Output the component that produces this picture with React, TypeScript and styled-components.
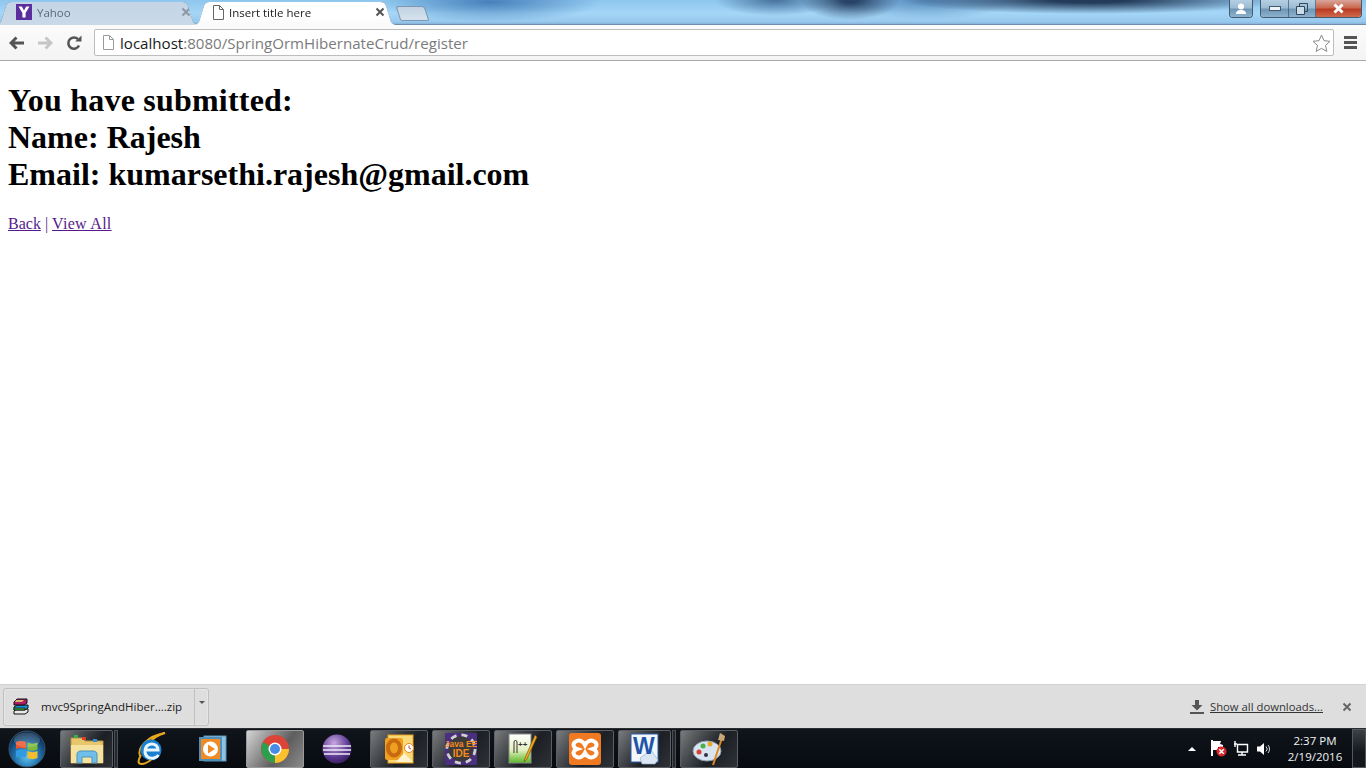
import React from "react";
import styled, { createGlobalStyle } from "styled-components";

const GlobalStyle = createGlobalStyle`
  html, body {
    margin: 0;
    padding: 0;
    background: #fff;
  }
  body {
    font-family: "Liberation Serif", serif;
  }
`;

const Screen = styled.div`
  width: 1366px;
  height: 768px;
  overflow: hidden;
  display: flex;
  flex-direction: column;
`;

const TabStrip = styled.div`
  height: 25px;
  flex-shrink: 0;
  display: flex;
  align-items: flex-start;
  padding: 0 4px 0 0;
  box-sizing: border-box;
  border-bottom: 1px solid #6f8eae;
  background:
    radial-gradient(ellipse 190px 14px at 1090px 0px, rgba(30, 52, 82, 0.95) 20%, transparent),
    radial-gradient(ellipse 50px 20px at 850px 0px, rgba(34, 60, 94, 0.95) 15%, transparent),
    radial-gradient(ellipse 60px 16px at 775px 0px, rgba(52, 92, 136, 0.8), transparent),
    radial-gradient(ellipse 90px 20px at 925px 0px, rgba(70, 120, 172, 0.75), transparent),
    radial-gradient(ellipse 110px 20px at 490px 2px, rgba(56, 116, 178, 0.85), transparent),
    linear-gradient(180deg, #8ec6ee 0%, #a4d6f7 55%, #98c9ee 90%, #86b3da 100%);
`;

const Tabs = styled.div`
  display: flex;
  padding-top: 1px;
  height: 24px;
  filter: drop-shadow(0 0 0.6px #4f6a86);
`;

const Tab = styled.div<{ $active?: boolean }>`
  width: 206px;
  height: 24px;
  box-sizing: border-box;
  margin-left: ${(p) => (p.$active ? "-8px" : "-6px")};
  padding: 0 ${(p) => (p.$active ? "13px" : "9px")} 2px ${(p) => (p.$active ? "20px" : "22px")};
  display: flex;
  align-items: center;
  position: relative;
  z-index: ${(p) => (p.$active ? 2 : 1)};
  background: ${(p) =>
    p.$active
      ? "linear-gradient(180deg, #ffffff 0%, #ffffff 70%, #f8f9fa 100%)"
      : "linear-gradient(180deg, #c3d4e4 0%, #cad9e8 100%)"};
  clip-path: path("M0 24 C5 24 7 22 8 18 L12 5 C13 2 15 1 18 1 L188 1 C191 1 193 2 194 5 L198 18 C199 22 201 24 206 24 Z");
`;

const TabTitle = styled.span<{ $active?: boolean }>`
  flex: 1;
  margin-left: 5px;
  font: 11.5px "Open Sans", sans-serif;
  color: ${(p) => (p.$active ? "#222" : "#5c6a78")};
  white-space: nowrap;
`;

const NewTab = styled.div`
  width: 29px;
  height: 15px;
  margin: 6px 0 0 0;
  background: linear-gradient(180deg, #c2d2e2, #d6e2ee);
  border: 1px solid #7f97ae;
  box-sizing: border-box;
  border-radius: 3px 3px 2px 2px;
  transform: skewX(18deg);
`;

const WindowControls = styled.div`
  margin-left: auto;
  display: flex;
  gap: 7px;
`;

const CaptionGroup = styled.div`
  display: flex;
  height: 18px;
  box-sizing: border-box;
  border: 1px solid #46586c;
  border-top: 0;
  border-radius: 0 0 4px 4px;
  overflow: hidden;
  box-shadow: inset 0 0 0 1px rgba(255, 255, 255, 0.45);
`;

const CaptionButton = styled.div<{ $width: number; $close?: boolean }>`
  width: ${(p) => p.$width}px;
  display: flex;
  align-items: center;
  justify-content: center;
  border-right: 1px solid rgba(50, 70, 90, 0.6);
  background: ${(p) =>
    p.$close
      ? "linear-gradient(180deg, #d9a59b 0%, #c9694f 45%, #b93b22 55%, #cf6a4d 100%)"
      : "linear-gradient(180deg, #b5cfe2 0%, #9cbcd4 45%, #6f96b6 55%, #8cb2cf 100%)"};
  &:last-child {
    border-right: 0;
  }
`;

const Toolbar = styled.div`
  height: 36px;
  flex-shrink: 0;
  box-sizing: border-box;
  display: flex;
  align-items: center;
  padding: 0 8px 0 0;
  background: linear-gradient(180deg, #fbfbfb 0%, #f4f4f4 100%);
  border-bottom: 1px solid #a9a9a9;
`;

const NavButton = styled.div`
  width: 29px;
  height: 20px;
  display: flex;
  align-items: center;
  justify-content: center;
`;

const BackSlot = styled(NavButton)`
  width: 26px;
  margin-left: 4px;
`;

const Omnibox = styled.div`
  width: 1240px;
  height: 27px;
  margin-left: 6px;
  box-sizing: border-box;
  background: #fff;
  border: 1px solid #bdbdbd;
  border-radius: 2px;
  display: flex;
  align-items: center;
  padding: 0 2px 0 7px;
`;

const Url = styled.span`
  flex: 1;
  margin-left: 6px;
  font: 15.1px "Open Sans", sans-serif;
  color: #7b7b7b;
  white-space: nowrap;
`;

const Host = styled.span`
  color: #1a1a1a;
`;

const MenuButton = styled.div`
  margin-left: 10px;
  width: 13px;
  display: flex;
  flex-direction: column;
  gap: 2px;
  span {
    height: 3px;
    background: #555;
  }
`;

const Content = styled.main`
  flex: 1;
  padding: 0 8px;
  color: #000;
  overflow: hidden;
`;

const Heading = styled.h1`
  font: bold 32px/37px "Liberation Serif", serif;
  margin: 21px 0 22px;
`;

const HeadingLead = styled.span`
  letter-spacing: 0.21px;
`;

const LinkLine = styled.div`
  font: 16px/18px "Liberation Serif", serif;
  color: #551a8b;
  a {
    color: #551a8b;
  }
`;

const ViewAllLink = styled.a`
  letter-spacing: 0.28px;
`;

const DownloadBar = styled.div`
  height: 44px;
  flex-shrink: 0;
  box-sizing: border-box;
  background: #dedede;
  border-top: 1px solid #d2d2d2;
  display: flex;
  align-items: center;
  padding: 0 14px 0 3px;
`;

const DownloadItem = styled.div`
  width: 206px;
  height: 38px;
  box-sizing: border-box;
  display: flex;
  align-items: stretch;
  border: 1px solid #c0c0c0;
  border-radius: 3px;
  box-shadow: inset 0 0 0 1px #e6e6e6;
`;

const DownloadFile = styled.div`
  flex: 1;
  display: flex;
  align-items: center;
  padding-left: 9px;
  gap: 12px;
  border-right: 1px solid #c0c0c0;
  font: 11.5px "Open Sans", sans-serif;
  color: #222;
`;

const DownloadCaret = styled.div`
  width: 13px;
  display: flex;
  justify-content: center;
  padding-top: 12px;
  box-sizing: border-box;
  &::before {
    content: "";
    width: 0;
    height: 0;
    border-left: 3px solid transparent;
    border-right: 3px solid transparent;
    border-top: 3px solid #555;
  }
`;

const ShowAll = styled.a`
  margin-left: auto;
  display: flex;
  align-items: center;
  gap: 6px;
  font: 11.3px "Open Sans", sans-serif;
  color: #333;
  span {
    text-decoration: underline;
  }
`;

const CloseBar = styled.div`
  margin-left: 19px;
  display: flex;
`;

const Taskbar = styled.div`
  height: 40px;
  flex-shrink: 0;
  box-sizing: border-box;
  display: flex;
  align-items: center;
  background: linear-gradient(180deg, #10151b 0%, #070b10 100%);
  border-top: 1px solid #2a2e33;
  padding-left: 7px;
`;

const StartOrb = styled.div`
  width: 40px;
  height: 39px;
  display: flex;
  align-items: center;
  justify-content: center;
  margin-right: 13px;
`;

const TaskButton = styled.div<{ $width?: number; $active?: boolean; $bare?: boolean; $grouped?: boolean }>`
  width: ${(p) => p.$width ?? 58}px;
  height: 38px;
  margin-right: ${(p) => (p.$grouped ? 1 : 4)}px;
  box-sizing: border-box;
  flex-shrink: 0;
  display: flex;
  align-items: center;
  justify-content: center;
  border-radius: 2px;
  ${(p) =>
    p.$bare
      ? ""
      : `border: 1px solid ${p.$active ? "#9a9a9a" : "#5b5f63"};`}
  background: ${(p) =>
    p.$bare
      ? "transparent"
      : p.$active
        ? "linear-gradient(125deg, #d4d4d4 0%, #8f8f8f 35%, #5e5e5e 60%, #8a8a8a 100%)"
        : "linear-gradient(125deg, #7a7c7e 0%, #404347 35%, #1c2025 60%, #2e3237 100%)"};
`;

const Grip = styled.div`
  width: 4px;
  height: 38px;
  margin-right: 4px;
  flex-shrink: 0;
  box-sizing: border-box;
  border: 1px solid #4a4e52;
  background: #24282c;
`;

const Tray = styled.div`
  margin-left: auto;
  display: flex;
  align-items: center;
  height: 100%;
`;

const TraySlot = styled.div<{ $width: number }>`
  width: ${(p) => p.$width}px;
  display: flex;
  justify-content: center;
`;

const Clock = styled.div`
  width: 74px;
  padding-top: 1px;
  text-align: center;
  font: 11.5px/16px "Open Sans", sans-serif;
  color: #f2f2f2;
`;

const ShowDesktop = styled.div`
  width: 14px;
  height: 100%;
  box-sizing: border-box;
  border: 1px solid #54585c;
  background: linear-gradient(180deg, #3d4044 0%, #14181c 60%);
`;

const TrayCaret = styled.div`
  width: 0;
  height: 0;
  border-left: 4px solid transparent;
  border-right: 4px solid transparent;
  border-bottom: 4px solid #fff;
`;

const PageIcon = ({ color = "#666" }: { color?: string }) => (
  <svg width="12" height="15" viewBox="0 0 12 15">
    <path d="M1.5.5h6l4 4v10h-10z" fill="#fff" stroke={color} />
    <path d="M7.5.5v4h4" fill="none" stroke={color} />
  </svg>
);

const TabClose = ({ color }: { color: string }) => (
  <svg width="10" height="10" viewBox="0 0 10 10">
    <path d="M1.5 1.5l7 7M8.5 1.5l-7 7" stroke={color} strokeWidth="2" />
  </svg>
);

const YahooIcon = () => (
  <svg width="16" height="16" viewBox="0 0 16 16">
    <rect width="16" height="16" fill="#5b2e9e" />
    <path d="M2.5 2.5h3.4L8 6.6l2.1-4.1h3.4L9.6 9v4.5H6.4V9z" fill="#fff" />
  </svg>
);

const ArrowIcon = ({ color, flip }: { color: string; flip?: boolean }) => (
  <svg width="16" height="14" viewBox="0 0 16 14">
    <path
      d="M7.5 1.5L2 7l5.5 5.5M2.5 7H15"
      fill="none"
      stroke={color}
      strokeWidth="3"
      transform={flip ? "matrix(-1 0 0 1 16 0)" : undefined}
    />
  </svg>
);

const ReloadIcon = () => (
  <svg width="16" height="16" viewBox="0 0 16 16">
    <path d="M13 10.5A5.6 5.6 0 1 1 12 4.2" fill="none" stroke="#555" strokeWidth="2.6" />
    <path d="M9.2 6.6H15.5V.4z" fill="#555" />
  </svg>
);

const StarIcon = () => (
  <svg width="19" height="18" viewBox="0 0 19 18">
    <path d="M9.5 1l2.5 5.7 6 .6-4.5 4.1 1.3 6-5.3-3.1-5.3 3.1 1.3-6L1 7.3l6-.6z" fill="#fff" stroke="#8a8a8a" />
  </svg>
);

const ArchiveIcon = () => (
  <svg width="16" height="17" viewBox="0 0 16 17">
    <path d="M1 13l3-2h11v3l-3 2H1z" fill="#e8e8e8" stroke="#111" />
    <path d="M1 9l3-2h11v3l-3 2H1z" fill="#1c8fd0" stroke="#111" />
    <path d="M1 10h11v2H1z" fill="#38a838" stroke="#111" strokeWidth=".7" />
    <path d="M1 4l3-3h10v4l-3 2H1z" fill="#b0186a" stroke="#111" />
    <path d="M3 2h8l-2 2H2z" fill="#d8b868" />
  </svg>
);

const DownloadIcon = () => (
  <svg width="14" height="14" viewBox="0 0 14 14">
    <path d="M5 0h4v5h3.5L7 10.5 1.5 5H5zM0 12h14v2H0z" fill="#555" />
  </svg>
);

const WinOrb = () => (
  <svg width="38" height="38" viewBox="0 0 38 38">
    <defs>
      <radialGradient id="orb" cx="50%" cy="72%" r="65%">
        <stop offset="0%" stopColor="#5fc3f0" />
        <stop offset="55%" stopColor="#1e6ea8" />
        <stop offset="100%" stopColor="#0c2d4f" />
      </radialGradient>
    </defs>
    <circle cx="19" cy="19" r="18" fill="url(#orb)" stroke="#3a5268" />
    <path d="M8 12c3-1.500 7-1.500 10 0v7c-3-1.500-7-1.500-10 0z" fill="#e8552c" />
    <path d="M19.500 12.500c3 1.500 7 1.500 10 0v7c-3 1.500-7 1.500-10 0z" fill="#7fba3a" />
    <path d="M8 20.500c3-1.500 7-1.500 10 0v7c-3-1.500-7-1.500-10 0z" fill="#2f9be0" />
    <path d="M19.500 21c3 1.500 7 1.500 10 0v7c-3 1.500-7 1.500-10 0z" fill="#f2bd2e" />
    <ellipse cx="19" cy="10" rx="13" ry="7.500" fill="#fff" opacity=".16" />
  </svg>
);

const FolderIcon = () => (
  <svg width="36" height="32" viewBox="0 0 36 32">
    <path d="M2 5h12l2 3h18v22H2z" fill="#e8c66c" stroke="#b69442" />
    <rect x="5" y="2" width="4" height="3" fill="#3cae4a" />
    <rect x="13" y="4" width="4" height="3" fill="#d9402c" />
    <rect x="24" y="6" width="4" height="3" fill="#2f8ed8" />
    <path d="M2 12h32v18H2z" fill="#f6e2a0" />
    <path d="M8 30V21c0-2 2-3 4-3h12c2 0 4 1 4 3v9h-5v-6H13v6z" fill="#6fbfe8" stroke="#4a93c0" />
  </svg>
);

const IeIcon = () => (
  <svg width="34" height="34" viewBox="0 0 34 34">
    <path d="M6 24C3 16 13 4 31 1c-7 2-13 6-17 11" fill="none" stroke="#e8a71c" strokeWidth="2" />
    <circle cx="17" cy="18" r="10.500" fill="#1a7fd0" />
    <path d="M11 18h13c0-4-3-6-6.500-6S10.500 15 11 20s5 7 9 6c2-.5 3.500-1.500 4.500-3" fill="none" stroke="#e7f5ff" strokeWidth="3" />
    <path d="M7 23c-3 5-4 9 1 9 3 0 6-2 9-4" fill="none" stroke="#e8a71c" strokeWidth="2" />
  </svg>
);

const MediaIcon = () => (
  <svg width="28" height="27" viewBox="0 0 28 27">
    <rect x="5" y="1" width="22" height="25" fill="#8ec2e0" stroke="#5b93b8" />
    <rect x="1" y="3" width="21" height="22" fill="#f08a24" stroke="#4f8fb8" strokeWidth="2" />
    <circle cx="11.500" cy="14" r="7.500" fill="#fff" />
    <path d="M9 9.500l7 4.500-7 4.500z" fill="#f08a24" />
  </svg>
);

const ChromeIcon = () => (
  <svg width="30" height="30" viewBox="0 0 30 30">
    <circle cx="15" cy="15" r="14" fill="#db4437" />
    <path d="M15 15L3 8A14 14 0 0 0 15 29z" fill="#2f9e4f" />
    <path d="M15 15h14A14 14 0 0 1 15 29z" fill="#fbc02d" />
    <circle cx="15" cy="15" r="6.500" fill="#fff" />
    <circle cx="15" cy="15" r="5" fill="#4a8be8" />
  </svg>
);

const EclipseIcon = () => (
  <svg width="30" height="30" viewBox="0 0 30 30">
    <defs>
      <radialGradient id="ecl" cx="40%" cy="30%" r="80%">
        <stop offset="0%" stopColor="#c9a8e0" />
        <stop offset="60%" stopColor="#5c3a92" />
        <stop offset="100%" stopColor="#2a1750" />
      </radialGradient>
    </defs>
    <circle cx="15" cy="15" r="14.500" fill="url(#ecl)" />
    <path d="M1 12h28M1 16h28M2 20h26" stroke="#f0eaf8" strokeWidth="1.400" />
  </svg>
);

const OutlookIcon = () => (
  <svg width="30" height="30" viewBox="0 0 30 30">
    <rect x="4" y="1" width="25" height="28" fill="#fbd877" stroke="#e8a020" />
    <rect x="1" y="4" width="18" height="22" rx="2" fill="#f0a020" />
    <ellipse cx="10" cy="14" rx="6" ry="7.500" fill="none" stroke="#c86a10" strokeWidth="4" />
    <circle cx="25" cy="14" r="4.500" fill="#fff" stroke="#e08a20" />
    <path d="M25 11.500V14l2 1" fill="none" stroke="#c0501c" />
    <path d="M12 28l8-9 9 9z" fill="#fff3cf" />
  </svg>
);

const JavaEeIcon = () => (
  <svg width="32" height="32" viewBox="0 0 32 32">
    <rect width="32" height="32" rx="1" fill="#4b2f7f" />
    <circle cx="16" cy="16" r="14" fill="none" stroke="#d0d0d0" strokeWidth="3" strokeDasharray="6 5" />
    <circle cx="16" cy="16" r="12.500" fill="#3a3a3a" />
    <text x="16" y="14" textAnchor="middle" fontFamily="Liberation Sans, sans-serif" fontSize="8.500" fontWeight="bold" fill="#f58a1f">
      Java EE
    </text>
    <text x="16" y="24" textAnchor="middle" fontFamily="Liberation Sans, sans-serif" fontSize="10" fontWeight="bold" fill="#f58a1f">
      IDE
    </text>
  </svg>
);

const NotepadIcon = () => (
  <svg width="30" height="33" viewBox="0 0 30 33">
    <defs>
      <linearGradient id="npp" x1="0" y1="0" x2="0" y2="1">
        <stop offset="0%" stopColor="#ffffff" />
        <stop offset="55%" stopColor="#e4f0c0" />
        <stop offset="100%" stopColor="#58b828" />
      </linearGradient>
    </defs>
    <rect x="1" y="2" width="22" height="29" fill="url(#npp)" stroke="#888" />
    <path d="M6 21V10a1.500 1.500 0 0 1 3 0v11" fill="none" stroke="#333" />
    <text x="10" y="15" fontFamily="Liberation Sans, sans-serif" fontSize="8" fontWeight="bold" fill="#333">
      ++
    </text>
    <path d="M27 3L17 26l-1 4 3-3L29 5z" fill="#f0a818" stroke="#6a4a10" strokeWidth=".6" />
  </svg>
);

const XamppIcon = () => (
  <svg width="32" height="32" viewBox="0 0 32 32">
    <rect width="32" height="32" rx="3" fill="#ef7a22" />
    <path d="M6 9c4-3 8-1 10 3 2-4 6-6 10-3 3 3 1 6-2 7 3 1 5 4 2 7-4 3-8 1-10-3-2 4-6 6-10 3-3-3-1-6 2-7-3-1-5-4-2-7z" fill="none" stroke="#fff" strokeWidth="4" />
  </svg>
);

const WordIcon = () => (
  <svg width="30" height="32" viewBox="0 0 30 32">
    <rect x="1" y="1" width="27" height="28" fill="#f2f7fc" stroke="#2a5aa8" />
    <path d="M10 25l11-8 7 10-3 4H12z" fill="#dbe6f3" stroke="#8ea8c8" strokeWidth=".6" />
    <text x="3" y="21" fontFamily="Liberation Sans, sans-serif" fontSize="23" fontWeight="bold" fill="#1f54a8">
      W
    </text>
  </svg>
);

const PaintIcon = () => (
  <svg width="34" height="34" viewBox="0 0 34 34">
    <ellipse cx="15" cy="19" rx="14" ry="10" fill="#d8e4f0" stroke="#8ca0b4" />
    <circle cx="7" cy="20" r="2.500" fill="#d84030" />
    <circle cx="11" cy="14" r="2.500" fill="#4ab04a" />
    <circle cx="18" cy="12" r="2.500" fill="#e8a828" />
    <circle cx="14" cy="23" r="2" fill="#334" />
    <path d="M30 6L21 33" stroke="#e08820" strokeWidth="2" />
    <path d="M26 8l2-7 5 3-1 5z" fill="#c8a878" />
  </svg>
);

const FlagIcon = () => (
  <svg width="17" height="17" viewBox="0 0 17 17">
    <path d="M2 0v16" stroke="#fff" strokeWidth="2" />
    <path d="M3 1h8l-1 3 3 1v2H3z" fill="#fff" />
    <path d="M3 7h5v3H3z" fill="#fff" />
    <circle cx="11.500" cy="11.500" r="5" fill="#d8272d" />
    <path d="M9.300 9.300l4.400 4.400M13.700 9.300l-4.400 4.400" stroke="#fff" strokeWidth="1.500" />
  </svg>
);

const NetworkIcon = () => (
  <svg width="15" height="15" viewBox="0 0 15 15">
    <path d="M3.500 3.500h10v7.500h-10zM8 11v2.500M4 14h8" fill="none" stroke="#fff" strokeWidth="1.400" />
    <path d="M1 0v6M0 3h3" stroke="#fff" strokeWidth="1.400" />
  </svg>
);

const SpeakerIcon = () => (
  <svg width="16" height="14" viewBox="0 0 16 14">
    <path d="M0 4.500h3L7 1v12L3 9.500H0z" fill="#fff" />
    <path d="M9 4.500a3.500 3.500 0 0 1 0 5M11 3a6 6 0 0 1 0 8" fill="none" stroke="#d8d8d8" />
  </svg>
);

export default function App() {
  return (
    <Screen>
      <GlobalStyle />
      <TabStrip>
        <Tabs>
          <Tab>
            <YahooIcon />
            <TabTitle>Yahoo</TabTitle>
            <TabClose color="#8a97a4" />
          </Tab>
          <Tab $active>
            <PageIcon />
            <TabTitle $active>Insert title here</TabTitle>
            <TabClose color="#555" />
          </Tab>
        </Tabs>
        <NewTab />
        <WindowControls>
          <CaptionGroup>
            <CaptionButton $width={22}>
              <svg width="12" height="12" viewBox="0 0 12 12">
                <circle cx="6" cy="3.500" r="3" fill="#fff" />
                <path d="M1 11c0-3 2-4 5-4s5 1 5 4z" fill="#fff" />
              </svg>
            </CaptionButton>
          </CaptionGroup>
          <CaptionGroup>
            <CaptionButton $width={27}>
              <svg width="12" height="5" viewBox="0 0 12 5">
                <rect x=".5" y=".5" width="11" height="4" fill="#eef3f7" stroke="#44586c" />
              </svg>
            </CaptionButton>
            <CaptionButton $width={26}>
              <svg width="12" height="12" viewBox="0 0 12 12">
                <path d="M3.500.500h8v8h-8z" fill="none" stroke="#34485c" />
                <path d="M.500 3.500h8v8h-8z" fill="#c8dcea" stroke="#34485c" />
              </svg>
            </CaptionButton>
            <CaptionButton $width={45} $close>
              <svg width="13" height="11" viewBox="0 0 13 11">
                <path d="M2.500 1.500l8 8M10.500 1.500l-8 8" stroke="#fff" strokeWidth="3" />
              </svg>
            </CaptionButton>
          </CaptionGroup>
        </WindowControls>
      </TabStrip>

      <Toolbar>
        <BackSlot>
          <ArrowIcon color="#555" />
        </BackSlot>
        <NavButton>
          <ArrowIcon color="#c6c6c6" flip />
        </NavButton>
        <NavButton>
          <ReloadIcon />
        </NavButton>
        <Omnibox>
          <PageIcon color="#9a9a9a" />
          <Url>
            <Host>localhost</Host>:8080/SpringOrmHibernateCrud/register
          </Url>
          <StarIcon />
        </Omnibox>
        <MenuButton>
          <span />
          <span />
          <span />
        </MenuButton>
      </Toolbar>

      <Content>
        <Heading>
          <HeadingLead>You have submitted:</HeadingLead>
          <br />
          Name: Rajesh
          <br />
          Email: kumarsethi.rajesh@gmail.com
        </Heading>
        <LinkLine>
          <a href="#back">Back</a> | <ViewAllLink href="#all">View All</ViewAllLink>
        </LinkLine>
      </Content>

      <DownloadBar>
        <DownloadItem>
          <DownloadFile>
            <ArchiveIcon />
            mvc9SpringAndHiber....zip
          </DownloadFile>
          <DownloadCaret />
        </DownloadItem>
        <ShowAll>
          <DownloadIcon />
          <span>Show all downloads...</span>
        </ShowAll>
        <CloseBar>
          <TabClose color="#666" />
        </CloseBar>
      </DownloadBar>

      <Taskbar>
        <StartOrb>
          <WinOrb />
        </StartOrb>
        <TaskButton $width={53} $grouped>
          <FolderIcon />
        </TaskButton>
        <Grip />
        <TaskButton $bare>
          <IeIcon />
        </TaskButton>
        <TaskButton $bare>
          <MediaIcon />
        </TaskButton>
        <TaskButton $active>
          <ChromeIcon />
        </TaskButton>
        <TaskButton $bare>
          <EclipseIcon />
        </TaskButton>
        <TaskButton>
          <OutlookIcon />
        </TaskButton>
        <TaskButton>
          <JavaEeIcon />
        </TaskButton>
        <TaskButton>
          <NotepadIcon />
        </TaskButton>
        <TaskButton>
          <XamppIcon />
        </TaskButton>
        <TaskButton $width={53} $grouped>
          <WordIcon />
        </TaskButton>
        <Grip />
        <TaskButton>
          <PaintIcon />
        </TaskButton>
        <Tray>
          <TraySlot $width={28}>
            <TrayCaret />
          </TraySlot>
          <TraySlot $width={24}>
            <FlagIcon />
          </TraySlot>
          <TraySlot $width={22}>
            <NetworkIcon />
          </TraySlot>
          <TraySlot $width={26}>
            <SpeakerIcon />
          </TraySlot>
          <Clock>
            2:37 PM
            <br />
            2/19/2016
          </Clock>
          <ShowDesktop />
        </Tray>
      </Taskbar>
    </Screen>
  );
}
